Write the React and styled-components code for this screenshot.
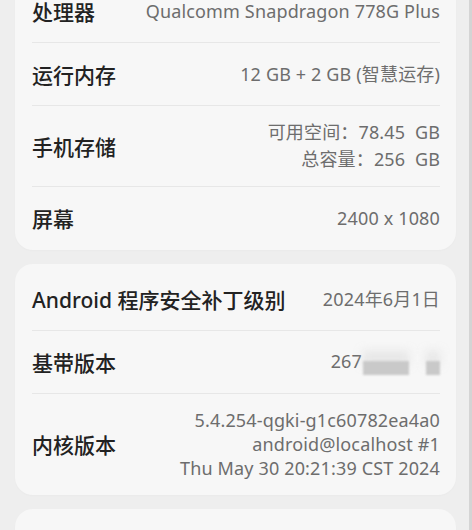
import styled, { createGlobalStyle } from "styled-components";

const GlobalStyle = createGlobalStyle`
  html, body {
    margin: 0;
    padding: 0;
    background: #eeeeee;
  }
  body {
    font-family: "Noto Sans", "Noto Sans CJK SC", sans-serif;
    overflow: hidden;
  }
`;

const Screen = styled.div`
  width: 472px;
  height: 530px;
  overflow: hidden;
  box-sizing: border-box;
  border-right: 3px solid #d4d4d4;
  background: #eeeeee;
`;

const List = styled.div`
  display: flex;
  flex-direction: column;
  gap: 14px;
  margin-top: -24px;
  padding: 0 13px 0 15px;
`;

const Card = styled.div`
  background: #f7f7f7;
  border-radius: 18px;
  padding: 3px 16px 1px 17px;
  box-shadow: 0 1px 2px rgba(0, 0, 0, 0.02);
`;

const Row = styled.div`
  display: flex;
  align-items: center;
  justify-content: space-between;
  min-height: 63px;
  box-sizing: border-box;
  padding: ${(p) => p.$pad || 0}px 0;
  & + & {
    border-top: 1px solid #e7e7e7;
  }
`;

const Label = styled.div`
  font-family: "Noto Sans", "Noto Sans CJK SC", sans-serif;
  font-size: 21px;
  font-weight: 500;
  color: #222222;
  white-space: nowrap;
`;

const Value = styled.div`
  font-family: "Noto Sans", "Noto Sans CJK SC", sans-serif;
  font-size: 18px;
  letter-spacing: 0.15px;
  color: #6d6d6d;
  text-align: right;
  line-height: ${(p) => p.$lh || 24}px;
  white-space: nowrap;
`;

const Redacted = styled.span`
  display: inline-flex;
  align-items: flex-end;
  vertical-align: middle;
  margin-left: 1px;
  height: 24px;
`;

const Blur = styled.span`
  display: inline-block;
  width: ${(p) => p.$w}px;
  height: 14px;
  margin-left: ${(p) => p.$ml || 0}px;
  background: #c9c9c9;
  filter: blur(1px);
  box-shadow: 0 -10px 8px rgba(215, 215, 215, 0.5);
`;

const App = () => {
  return (
    <>
      <GlobalStyle />
      <Screen>
        <List>
          <Card>
            <Row>
              <Label>处理器</Label>
              <Value>Qualcomm Snapdragon 778G Plus</Value>
            </Row>
            <Row>
              <Label>运行内存</Label>
              <Value>12 GB + 2 GB (智慧运存)</Value>
            </Row>
            <Row $pad={13}>
              <Label>手机存储</Label>
              <Value $lh={27}>
                可用空间：78.45&nbsp; GB
                <br />
                总容量：256&nbsp; GB
              </Value>
            </Row>
            <Row>
              <Label>屏幕</Label>
              <Value>2400 x 1080</Value>
            </Row>
          </Card>

          <Card>
            <Row>
              <Label>Android 程序安全补丁级别</Label>
              <Value>2024年6月1日</Value>
            </Row>
            <Row>
              <Label>基带版本</Label>
              <Value>
                267
                <Redacted>
                  <Blur $w={46} />
                  <Blur $w={14} $ml={17} />
                </Redacted>
              </Value>
            </Row>
            <Row $pad={14}>
              <Label>内核版本</Label>
              <Value $lh={24}>
                5.4.254-qgki-g1c60782ea4a0
                <br />
                android@localhost #1
                <br />
                Thu May 30 20:21:39 CST 2024
              </Value>
            </Row>
          </Card>

          <Card>
            <Row>
              <Label>&nbsp;</Label>
            </Row>
          </Card>
        </List>
      </Screen>
    </>
  );
};

export default App;
